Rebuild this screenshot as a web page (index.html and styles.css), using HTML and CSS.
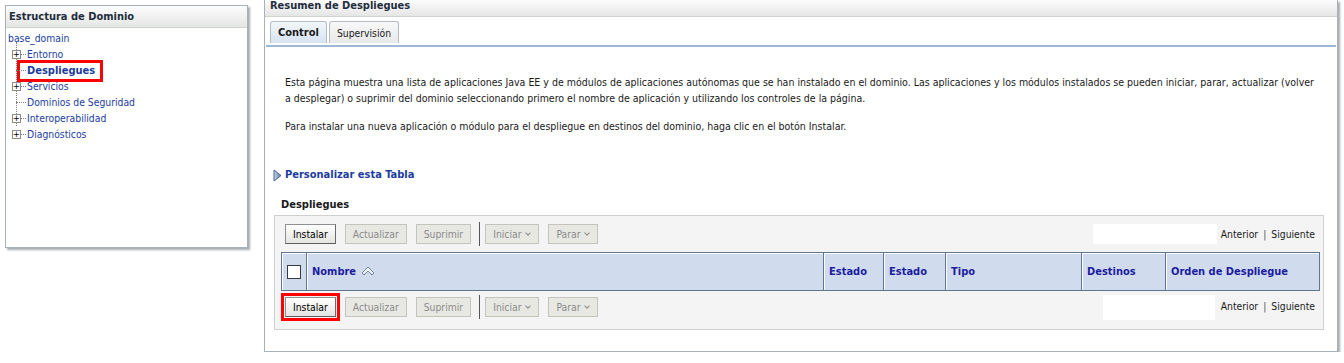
FILE: index.html
```html
<!DOCTYPE html>
<html lang="es">
<head>
    <meta charset="UTF-8">
    <title>Resumen de Despliegues</title>
    <link rel="stylesheet" href="styles.css">
</head>
<body>
    <div class="pagina">
        <aside class="panel arbol-panel">
            <div class="panel-cabecera">Estructura de Dominio</div>
            <div class="arbol">
                <a class="raiz" href="#">base_domain</a>
                <ul>
                    <li class="con-hijos"><span class="expandir">+</span><a href="#">Entorno</a></li>
                    <li class="actual"><a href="#">Despliegues</a></li>
                    <li class="con-hijos"><span class="expandir">+</span><a href="#">Servicios</a></li>
                    <li><a href="#">Dominios de Seguridad</a></li>
                    <li class="con-hijos"><span class="expandir">+</span><a href="#">Interoperabilidad</a></li>
                    <li class="con-hijos ultimo"><span class="expandir">+</span><a href="#">Diagnósticos</a></li>
                </ul>
            </div>
        </aside>

        <main class="panel principal">
            <div class="panel-cabecera cabecera-principal">Resumen de Despliegues</div>
            <div class="pestanas">
                <span class="pestana activa">Control</span>
                <span class="pestana">Supervisión</span>
            </div>
            <div class="contenido">
                <p class="descripcion">Esta página muestra una lista de aplicaciones Java EE y de módulos de aplicaciones autónomas que se han instalado en el dominio. Las aplicaciones y los módulos instalados se pueden iniciar, parar, actualizar (volver a&nbsp;desplegar) o suprimir del dominio seleccionando primero el nombre de aplicación y utilizando los controles de la página.</p>
                <p class="descripcion">Para instalar una nueva aplicación o módulo para el despliegue en destinos del dominio, haga clic en el botón Instalar.</p>

                <a class="personalizar" href="#">
                    <svg width="9" height="13" viewBox="0 0 9 13">
                        <defs>
                            <linearGradient id="tri" x1="0" y1="0" x2="1" y2="0">
                                <stop offset="0" stop-color="#c9d6ea"/>
                                <stop offset="1" stop-color="#5b78a8"/>
                            </linearGradient>
                        </defs>
                        <path d="M1 1 L8 6.5 L1 12 Z" fill="url(#tri)" stroke="#4a6694" stroke-width="1" stroke-linejoin="round"/>
                    </svg>
                    Personalizar esta Tabla
                </a>

                <h3 class="titulo-tabla">Despliegues</h3>
                <div class="caja-tabla">
                    <div class="barra">
                        <div class="botones">
                            <button class="boton">Instalar</button>
                            <button class="boton inactivo">Actualizar</button>
                            <button class="boton inactivo">Suprimir</button>
                            <span class="separador"></span>
                            <button class="boton inactivo">Iniciar <span class="flecha"></span></button>
                            <button class="boton inactivo">Parar <span class="flecha"></span></button>
                        </div>
                        <div class="paginacion">
                            <span class="campo"></span>
                            <span class="enlace">Anterior</span><span class="barra-v">|</span><span class="enlace">Siguiente</span>
                        </div>
                    </div>
                    <table class="tabla">
                        <thead>
                            <tr>
                                <th class="col-check"><span class="check"></span></th>
                                <th class="col-nombre">Nombre
                                    <svg width="14" height="10" viewBox="0 0 14 10"><path d="M1 7 L7 1 L13 7 L11 9 L7 5 L3 9 Z" fill="#eef2f8" stroke="#7284a4" stroke-width="1" stroke-linejoin="round"/></svg>
                                </th>
                                <th class="col-estado">Estado</th>
                                <th class="col-estado2">Estado</th>
                                <th class="col-tipo">Tipo</th>
                                <th class="col-destinos">Destinos</th>
                                <th class="col-orden">Orden de Despliegue</th>
                            </tr>
                        </thead>
                    </table>
                    <div class="barra barra-inferior">
                        <div class="botones">
                            <button class="boton marcado">Instalar</button>
                            <button class="boton inactivo">Actualizar</button>
                            <button class="boton inactivo">Suprimir</button>
                            <span class="separador"></span>
                            <button class="boton inactivo">Iniciar <span class="flecha"></span></button>
                            <button class="boton inactivo">Parar <span class="flecha"></span></button>
                        </div>
                        <div class="paginacion">
                            <span class="campo campo-inferior"></span>
                            <span class="enlace">Anterior</span><span class="barra-v">|</span><span class="enlace">Siguiente</span>
                        </div>
                    </div>
                </div>
            </div>
        </main>
    </div>
</body>
</html>
```

FILE: styles.css
```css
* {
    box-sizing: border-box;
    margin: 0;
    padding: 0;
}
body {
    background-color: #ffffff;
    font-family: Tahoma, "DejaVu Sans Condensed", "Liberation Sans", sans-serif;
    font-size: 10.3px;
    color: #000000;
    overflow: hidden;
}
a {
    text-decoration: none;
}
.pagina {
    display: flex;
    align-items: flex-start;
}
.panel {
    background-color: #ffffff;
    border: 1px solid #a8b1b8;
    box-shadow: 2px 2px 2px rgba(60, 70, 80, 0.45);
}
.panel-cabecera {
    height: 22px;
    line-height: 21px;
    padding-left: 3px;
    font-weight: bold;
    font-size: 11px;
    color: #1f2d3d;
    background: linear-gradient(#fcfcfc, #e4e6e4);
    border-bottom: 1px solid #cfd3cf;
}

/* arbol */
.arbol-panel {
    margin: 5px 0 0 5px;
    width: 243px;
    height: 243px;
}
.arbol {
    padding: 2px 0 0 2px;
    line-height: 16px;
}
.arbol a {
    color: #1b3d9e;
}
.arbol ul {
    list-style: none;
    margin-left: 8px;
    position: relative;
}
.arbol ul::before {
    content: "";
    position: absolute;
    left: 0;
    top: -4px;
    height: 84px;
    border-left: 1px dotted #808080;
}
.arbol li {
    position: relative;
    padding-left: 11px;
    height: 16px;
}
.arbol li::before {
    content: "";
    position: absolute;
    left: 0;
    top: 8px;
    width: 10px;
    border-top: 1px dotted #808080;
}
.expandir {
    position: absolute;
    left: -4px;
    top: 4px;
    width: 9px;
    height: 9px;
    border: 1px solid #8c8c8c;
    background: #ffffff;
    font-size: 9px;
    line-height: 6px;
    text-align: center;
    color: #000;
    z-index: 1;
}
.arbol li.actual a {
    display: inline-block;
    font-weight: bold;
    font-size: 11px;
    line-height: 16px;
    margin-left: -7px;
    padding: 0 5px 0 7px;
    outline: 3px solid #ff0000;
}

/* panel principal */
.principal {
    margin-left: 16px;
    width: 1074px;
    height: 352px;
    border-top: none;
}
.cabecera-principal {
    height: 17px;
    line-height: 11px;
    padding-left: 5px;
}
.pestanas {
    display: flex;
    gap: 2px;
    padding: 4px 0 0 4px;
    margin: 0 1px;
    border-bottom: 2px solid #9cb8d4;
    height: 30px;
}
.pestana {
    height: 22px;
    line-height: 22px;
    padding: 0 7px;
    border: 1px solid #b5bcc4;
    border-bottom: none;
    border-radius: 3px 3px 0 0;
    background: linear-gradient(#f8f8f8, #e8e8e8);
    color: #1a1a1a;
}
.pestana.activa {
    font-weight: bold;
    font-size: 11px;
    background: linear-gradient(#f2f6fb, #d7e3f0);
}
.contenido {
    padding: 27px 10px 0 9px;
}
.descripcion {
    margin: 0 5px 12px 11px;
    font-size: 10.5px;
    line-height: 16px;
    color: #1a1a1a;
}
.personalizar {
    display: flex;
    align-items: center;
    gap: 3px;
    margin-top: 33px;
    margin-left: -1px;
    font-weight: bold;
    font-size: 11px;
    line-height: 16px;
    color: #1b3d9e;
}
.titulo-tabla {
    font-size: 11px;
    line-height: 16px;
    margin: 14px 0 2px 7px;
    color: #1a1a1a;
}
.caja-tabla {
    width: 1050px;
    background-color: #f4f4f4;
    border: 1px solid #cfcfcf;
    padding: 0 3px 6px 6px;
}
.barra {
    display: flex;
    justify-content: space-between;
    align-items: center;
    height: 36px;
    padding: 0 5px 0 4px;
}
.barra-inferior {
    height: 32px;
    align-items: flex-start;
    padding-top: 4px;
}
.botones {
    display: flex;
    align-items: center;
    gap: 9px;
}
.boton {
    height: 20px;
    padding: 0 7px;
    font-family: inherit;
    font-size: 10.3px;
    color: #000;
    border: 1px solid #8f8f8f;
    border-bottom-color: #5e5e5e;
    border-right-color: #6a6a6a;
    background: linear-gradient(#ffffff, #e4e4e0);
}
.boton.inactivo {
    color: #8a8a8a;
    border: 1px solid #c4c4bc;
    background: #e8e8e3;
}
.boton.marcado {
    outline: 3px solid #ff0000;
    outline-offset: 1px;
}
.flecha {
    display: inline-block;
    width: 4px;
    height: 4px;
    border-right: 1px solid #8a8a8a;
    border-bottom: 1px solid #8a8a8a;
    transform: rotate(45deg);
    margin: 0 1px 3px 2px;
}
.separador {
    width: 1px;
    height: 24px;
    background: #555;
    margin: 0 -4px 0 -1px;
}
.paginacion {
    display: flex;
    align-items: center;
    color: #1a1a1a;
}
.campo {
    width: 124px;
    height: 20px;
    background: #ffffff;
    margin-right: 4px;
}
.campo-inferior {
    width: 112px;
    height: 25px;
    margin-right: 6px;
}
.barra-inferior .paginacion .enlace,
.barra-inferior .barra-v {
    margin-top: -4px;
}
.barra-v {
    margin: 0 5px;
    color: #555;
}
.tabla {
    width: 1039px;
    border-collapse: collapse;
}
.tabla th {
    height: 38px;
    background-color: #d0dcee;
    border: 1px solid #5f7590;
    box-shadow: inset 1px 1px 0 #ffffff;
    color: #1c1ca0;
    font-size: 11px;
    text-align: left;
    padding: 0 5px;
    white-space: nowrap;
}
.tabla th svg {
    vertical-align: -1px;
    margin-left: 1px;
}
.col-check {
    width: 25px;
}
.check {
    display: block;
    width: 14px;
    height: 14px;
    border: 1px solid #3a3a3a;
    background: #ffffff;
}
.col-nombre { width: 517px; }
.col-estado { width: 60px; }
.col-estado2 { width: 62px; }
.col-tipo { width: 136px; }
.col-destinos { width: 84px; }
```
